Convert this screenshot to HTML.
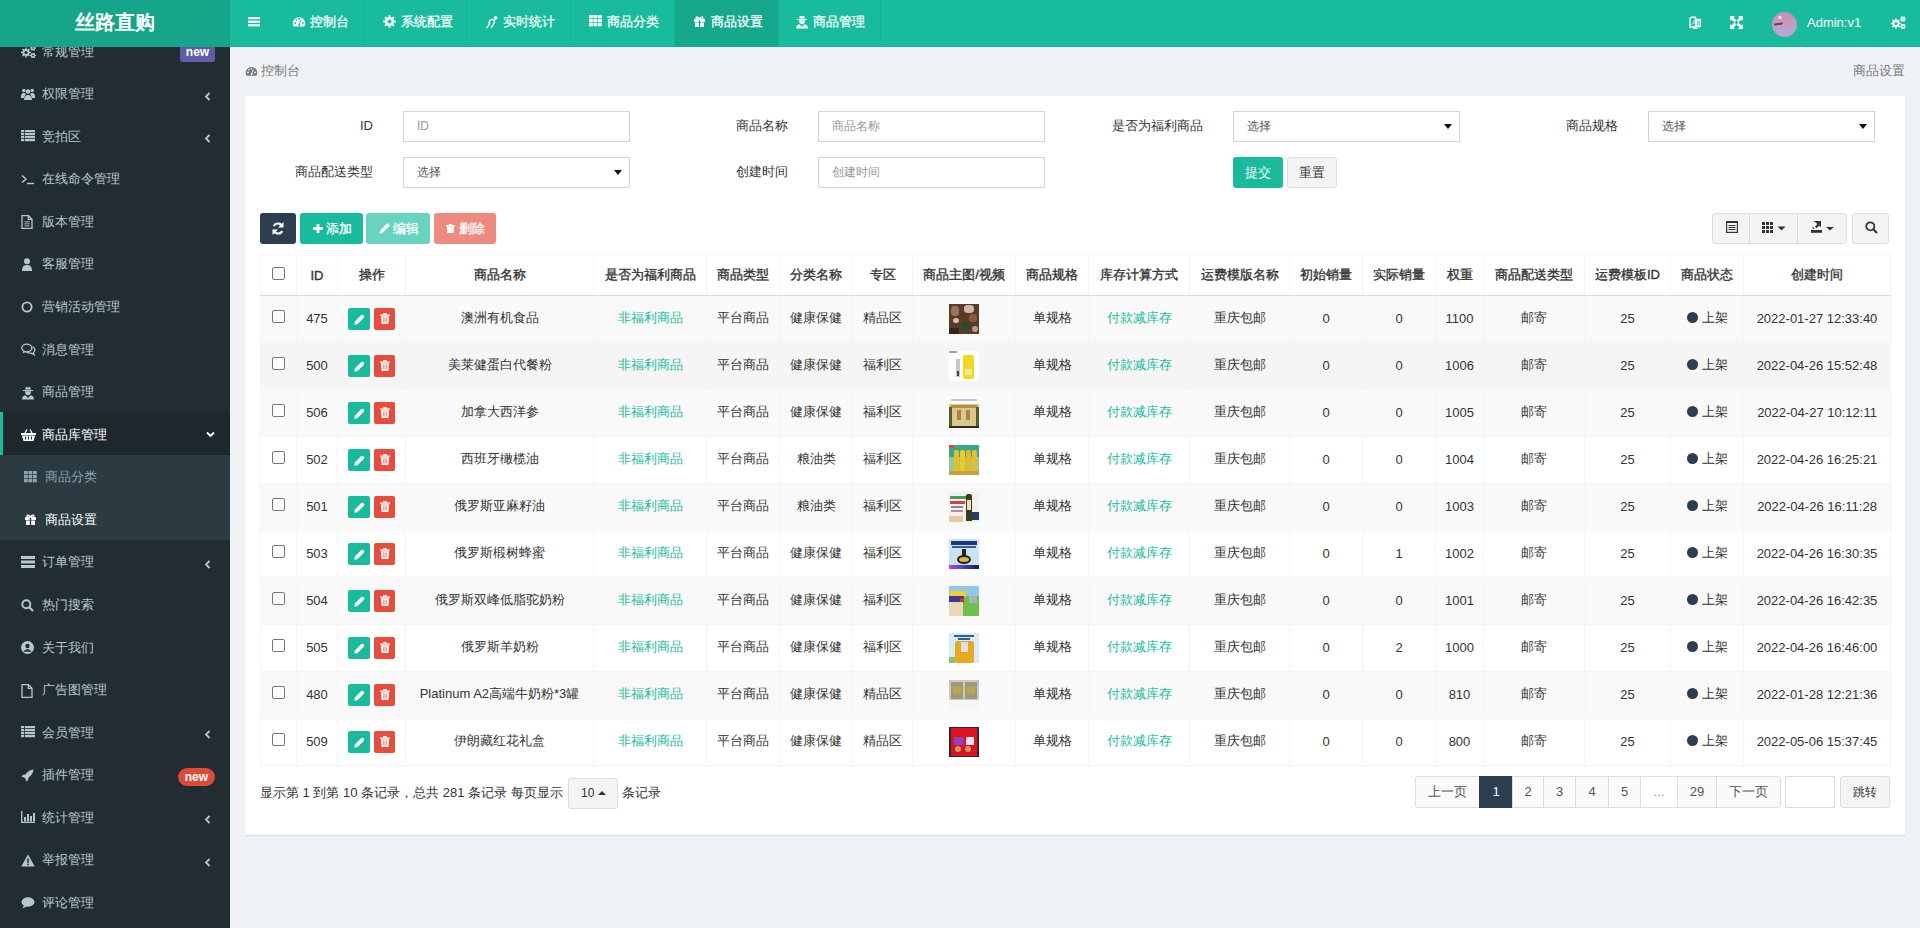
<!DOCTYPE html><html><head><meta charset="utf-8"><title>商品设置</title><style>
*{box-sizing:border-box;margin:0;padding:0}
html,body{width:1920px;height:928px;overflow:hidden}
body{font-family:"Liberation Sans",sans-serif;font-size:13px;color:#333;background:#f0f3f6;position:relative}
.abs{position:absolute}
svg{display:block}
#hdr{position:absolute;left:0;top:0;width:1920px;height:47px;background:#18bc9c;box-shadow:inset 0 -1px 0 rgba(0,0,0,0.06)}
#logo{position:absolute;left:0;top:0;width:230px;height:47px;background:#15a589;color:#fff;font-size:20px;font-weight:bold;text-align:center;line-height:45px;letter-spacing:0px}
.tab{position:absolute;top:0;height:47px;color:#fff;font-size:13px;line-height:42px;border-right:1px solid #17b294;white-space:nowrap}
.tab.on{background:#15a88c}
.tab .ic{position:absolute;top:15px}
.tab .tx{position:absolute;top:0.5px;-webkit-text-stroke:0.25px #fff}
#side{position:absolute;left:0;top:47px;width:230px;height:881px;background:#222d32;overflow:hidden}
.mi{position:absolute;left:0;width:230px;height:42.57px;color:#b8c7ce;white-space:nowrap}
.mi .tx{position:absolute;left:42px;top:13.4px;line-height:18px;font-size:13px}
.mi .ic{position:absolute;left:21px;top:16px}
.mi .chev{position:absolute;left:204px;top:20px}
#content{position:absolute;left:230px;top:47px;width:1690px;height:881px;background:#f0f3f6}
#panel{position:absolute;left:245px;top:96px;width:1660px;height:739px;background:#fff;box-shadow:0 1px 1px rgba(0,0,0,0.08)}
.lbl{position:absolute;width:160px;text-align:right;line-height:18px;font-size:13px;color:#333}
.inp{position:absolute;width:227px;height:31px;border:1px solid #d4d4d4;background:#fff;font-size:12px;line-height:29px;padding-left:13px;color:#999}
.inp.sel{color:#555}
.caret{position:absolute;width:0;height:0;border-left:4.5px solid transparent;border-right:4.5px solid transparent;border-top:5px solid #111}
.btn{position:absolute;height:31px;border-radius:3px;color:#fff;font-size:12px;line-height:31px;text-align:center;white-space:nowrap}
table.tb{position:absolute;left:260px;top:254px;width:1630px;border-collapse:collapse;table-layout:fixed;font-size:13px}
.tb th,.tb td{border:1px solid #f4f4f4;text-align:center;vertical-align:middle;white-space:nowrap;overflow:hidden;padding:0}
.tb th{height:41px;font-weight:normal;-webkit-text-stroke:0.35px #333;color:#333;border-bottom:1px solid #dadada;background:#fff}
.tb td{height:47px;color:#333;padding-bottom:2px}
.tb th b{-webkit-text-stroke:0}
.tb tr.odd td{background:#f9f9f9}
.tb tr.hov td{background:#f5f5f5}
.tb tr.ev td{background:#fff}
.cb{display:inline-block;width:13px;height:13px;border:1px solid #767676;border-radius:2px;background:#fff;vertical-align:middle;position:relative;top:-3px}
.tb td.grn,.grn{color:#18bc9c}
.sb{display:inline-block;width:22px;height:22px;border-radius:2px;vertical-align:middle;position:relative}
.thumb{display:inline-block;width:30px;height:30px;vertical-align:middle}
.pg{position:absolute;top:776px;height:32px;border:1px solid #ddd;background:#fafafa;color:#555;text-align:center;line-height:30px;font-size:13px}
</style></head><body>
<div id="hdr">
<div id="logo">丝路直购</div>
<svg class="abs" style="left:247.5px;top:16.8px" width="12" height="10" viewBox="0 0 12 10"><rect y="0" width="12" height="2.2" fill="#fff"/><rect y="3.6" width="12" height="2.2" fill="#fff"/><rect y="7.2" width="12" height="2.2" fill="#fff"/></svg>
<div class="tab" style="left:276px;width:88px">
<div class="ic" style="left:15.600000000000023px"><svg width="14" height="14" viewBox="0 0 14 14"><path d="M7 2.2A6.2 6.2 0 0 0 .8 8.4c0 1.2.3 2.2.9 3.2h10.6c.6-1 .9-2 .9-3.2A6.2 6.2 0 0 0 7 2.2z" fill="#fff"/><circle cx="3.2" cy="8" r=".9" fill="#18bc9c"/><circle cx="4.2" cy="5.1" r=".9" fill="#18bc9c"/><circle cx="7" cy="4" r=".9" fill="#18bc9c"/><circle cx="10.8" cy="8" r=".9" fill="#18bc9c"/><path d="M8.8 5 7.4 9.3" stroke="#18bc9c" stroke-width="1"/><circle cx="7.2" cy="10" r="1.1" fill="#18bc9c"/></svg></div>
<div class="tx" style="left:33.60000000000002px">控制台</div>
</div>
<div class="tab" style="left:364px;width:103px">
<div class="ic" style="left:18.80000000000001px"><svg width="13" height="13" viewBox="0 0 13 13"><path d="M10.99 5.51 L12.73 5.55 L12.73 7.45 L10.99 7.49 L10.37 8.98 L11.57 10.23 L10.23 11.57 L8.98 10.37 L7.49 10.99 L7.45 12.73 L5.55 12.73 L5.51 10.99 L4.02 10.37 L2.77 11.57 L1.43 10.23 L2.63 8.98 L2.01 7.49 L0.27 7.45 L0.27 5.55 L2.01 5.51 L2.63 4.02 L1.43 2.77 L2.77 1.43 L4.02 2.63 L5.51 2.01 L5.55 0.27 L7.45 0.27 L7.49 2.01 L8.98 2.63 L10.23 1.43 L11.57 2.77 L10.37 4.02Z" fill="#fff"/><circle cx="6.5" cy="6.5" r="2" fill="#18bc9c"/></svg></div>
<div class="tx" style="left:36.80000000000001px">系统配置</div>
</div>
<div class="tab" style="left:467px;width:104px">
<div class="ic" style="left:18.19999999999999px"><svg width="14" height="14" viewBox="0 0 14 14"><path d="M1.5 13.2C3 11 4.2 9.5 5 8.2" stroke="#fff" stroke-width="1.3" fill="none"/><path d="M4.5 9.5C3.5 7.5 4.5 4.8 7 4.5c2-.2 2.8 1.6 2.2 3.3-.6 1.8-1.8 3.8-3.4 4.8" stroke="#fff" stroke-width="1.4" fill="none"/><path d="M8.5 2.5 11 .5l1.5 2.8L10.5 5.5z" fill="#fff"/></svg></div>
<div class="tx" style="left:36.19999999999999px">实时统计</div>
</div>
<div class="tab" style="left:571px;width:104px">
<div class="ic" style="left:17.799999999999955px"><svg width="13" height="12" viewBox="0 0 13 12"><rect x="0.0" y="0" width="3.8" height="3.3" fill="#fff"/><rect x="4.5" y="0" width="3.8" height="3.3" fill="#fff"/><rect x="9.0" y="0" width="3.8" height="3.3" fill="#fff"/><rect x="0.0" y="4" width="3.8" height="3.3" fill="#fff"/><rect x="4.5" y="4" width="3.8" height="3.3" fill="#fff"/><rect x="9.0" y="4" width="3.8" height="3.3" fill="#fff"/><rect x="0.0" y="8" width="3.8" height="3.3" fill="#fff"/><rect x="4.5" y="8" width="3.8" height="3.3" fill="#fff"/><rect x="9.0" y="8" width="3.8" height="3.3" fill="#fff"/></svg></div>
<div class="tx" style="left:35.799999999999955px">商品分类</div>
</div>
<div class="tab on" style="left:675px;width:104px">
<div class="ic" style="left:18px"><svg width="13" height="13" viewBox="0 0 13 13"><path d="M1 4h11v3H1z" fill="#fff"/><path d="M2 7.5h9V12H2z" fill="#fff"/><path d="M5.8 4h1.4v8H5.8z" fill="#15a88c"/><path d="M6.5 4C5.5 2.2 3 1.2 3 3s3.5 1 3.5 1zM6.5 4c1-1.8 3.5-2.8 3.5-1S6.5 4 6.5 4z" fill="none" stroke="#fff" stroke-width="1.2"/></svg></div>
<div class="tx" style="left:36px">商品设置</div>
</div>
<div class="tab" style="left:779px;width:102px">
<div class="ic" style="left:15.799999999999955px"><svg width="14" height="14" viewBox="0 0 14 14"><path d="M4 3.5 5 .8l2 .7 2-.7 1 2.7z" fill="#fff"/><path d="M2 4h10v1H2z" fill="#fff"/><path d="M4 5.2h6c0 2.5-1.2 4-3 4s-3-1.5-3-4z" fill="#fff"/><path d="M1 13.5c0-2.5 1.5-4 3.5-4.3L7 12l2.5-2.8c2 .3 3.5 1.8 3.5 4.3z" fill="#fff"/></svg></div>
<div class="tx" style="left:33.799999999999955px">商品管理</div>
</div>
<svg class="abs" style="left:1689px;top:16px" width="13" height="13" viewBox="0 0 13 13"><path d="M1 2.2 3 1.2h3.5V11H1z" fill="none" stroke="#fff" stroke-width="1.4"/><path d="M6.5 2.8H12v8.5H6.5z" fill="#fff"/><path d="M2.5 8.5c1.5-.5 2.5-2 2.8-4.2" stroke="#fff" stroke-width="1" fill="none"/><path d="M8.3 9.5 9.2 5h.6l.9 4.5" stroke="#18bc9c" stroke-width=".9" fill="none"/><path d="M4 12.5h5" stroke="#fff" stroke-width="1.2"/></svg>
<svg class="abs" style="left:1730px;top:16px" width="13" height="13" viewBox="0 0 13 13"><path d="M0 0h5L3.5 1.5 6.5 4.5 4.5 6.5 1.5 3.5 0 5zM13 0v5L11.5 3.5 8.5 6.5 6.5 4.5 9.5 1.5 8 0zM13 13H8l1.5-1.5-3-3 2-2 3 3L13 8zM0 13V8l1.5 1.5 3-3 2 2-3 3L5 13z" fill="#fff"/></svg>
<div class="abs" style="left:1772px;top:12px;width:25px;height:25px;border-radius:50%;background:linear-gradient(180deg,#c98fb2 0%,#c69ab8 45%,#b8a4d6 75%,#c8a0c8 100%);overflow:hidden"><i style="position:absolute;left:2px;top:11px;width:9px;height:2px;background:#6a3a50;border-radius:1px;transform:rotate(-10deg)"></i><i style="position:absolute;left:6px;top:4px;width:4px;height:3px;background:#ecd0e8;border-radius:2px"></i></div>
<div class="abs" style="left:1807px;top:14px;color:#fff;font-size:13px;line-height:18px">Admin:v1</div>
<div class="abs" style="left:1891px;top:16px"><svg width="15" height="14" viewBox="0 0 15 14"><path d="M8.52 6.73 L9.94 6.75 L9.94 8.25 L8.52 8.27 L8.03 9.44 L9.03 10.46 L7.96 11.53 L6.94 10.53 L5.77 11.02 L5.75 12.44 L4.25 12.44 L4.23 11.02 L3.06 10.53 L2.04 11.53 L0.97 10.46 L1.97 9.44 L1.48 8.27 L0.06 8.25 L0.06 6.75 L1.48 6.73 L1.97 5.56 L0.97 4.54 L2.04 3.47 L3.06 4.47 L4.23 3.98 L4.25 2.56 L5.75 2.56 L5.77 3.98 L6.94 4.47 L7.96 3.47 L9.03 4.54 L8.03 5.56Z" fill="#fff"/><circle cx="5" cy="7.5" r="1.6" fill="#18bc9c"/><path d="M14.32 2.38 L14.95 2.45 L14.95 3.55 L14.32 3.62 L13.70 4.70 L13.95 5.28 L13.00 5.83 L12.62 5.32 L11.38 5.32 L11.00 5.83 L10.05 5.28 L10.30 4.70 L9.68 3.62 L9.05 3.55 L9.05 2.45 L9.68 2.38 L10.30 1.30 L10.05 0.72 L11.00 0.17 L11.38 0.68 L12.62 0.68 L13.00 0.17 L13.95 0.72 L13.70 1.30Z" fill="#fff"/><circle cx="12" cy="3" r="0.8" fill="#18bc9c"/><path d="M14.32 9.88 L14.95 9.95 L14.95 11.05 L14.32 11.12 L13.70 12.20 L13.95 12.78 L13.00 13.33 L12.62 12.82 L11.38 12.82 L11.00 13.33 L10.05 12.78 L10.30 12.20 L9.68 11.12 L9.05 11.05 L9.05 9.95 L9.68 9.88 L10.30 8.80 L10.05 8.22 L11.00 7.67 L11.38 8.18 L12.62 8.18 L13.00 7.67 L13.95 8.22 L13.70 8.80Z" fill="#fff"/><circle cx="12" cy="10.5" r="0.8" fill="#18bc9c"/></svg></div>
</div>
<div id="side">
<div class="mi" style="top:-17.87px;color:#b8c7ce">
<div class="ic" style="left:21px"><svg width="15" height="14" viewBox="0 0 15 14"><path d="M8.52 6.73 L9.94 6.75 L9.94 8.25 L8.52 8.27 L8.03 9.44 L9.03 10.46 L7.96 11.53 L6.94 10.53 L5.77 11.02 L5.75 12.44 L4.25 12.44 L4.23 11.02 L3.06 10.53 L2.04 11.53 L0.97 10.46 L1.97 9.44 L1.48 8.27 L0.06 8.25 L0.06 6.75 L1.48 6.73 L1.97 5.56 L0.97 4.54 L2.04 3.47 L3.06 4.47 L4.23 3.98 L4.25 2.56 L5.75 2.56 L5.77 3.98 L6.94 4.47 L7.96 3.47 L9.03 4.54 L8.03 5.56Z" fill="#b8c7ce"/><circle cx="5" cy="7.5" r="1.6" fill="#222d32"/><path d="M14.32 2.38 L14.95 2.45 L14.95 3.55 L14.32 3.62 L13.70 4.70 L13.95 5.28 L13.00 5.83 L12.62 5.32 L11.38 5.32 L11.00 5.83 L10.05 5.28 L10.30 4.70 L9.68 3.62 L9.05 3.55 L9.05 2.45 L9.68 2.38 L10.30 1.30 L10.05 0.72 L11.00 0.17 L11.38 0.68 L12.62 0.68 L13.00 0.17 L13.95 0.72 L13.70 1.30Z" fill="#b8c7ce"/><circle cx="12" cy="3" r="0.8" fill="#222d32"/><path d="M14.32 9.88 L14.95 9.95 L14.95 11.05 L14.32 11.12 L13.70 12.20 L13.95 12.78 L13.00 13.33 L12.62 12.82 L11.38 12.82 L11.00 13.33 L10.05 12.78 L10.30 12.20 L9.68 11.12 L9.05 11.05 L9.05 9.95 L9.68 9.88 L10.30 8.80 L10.05 8.22 L11.00 7.67 L11.38 8.18 L12.62 8.18 L13.00 7.67 L13.95 8.22 L13.70 8.80Z" fill="#b8c7ce"/><circle cx="12" cy="10.5" r="0.8" fill="#222d32"/></svg></div>
<div class="tx" style="left:42px">常规管理</div>
<div class="abs" style="left:180px;top:14.9px;width:35px;height:18px;background:#605ca8;border-radius:3px;color:#fff;font-weight:bold;font-size:12px;line-height:17px;text-align:center">new</div>
</div>
<div class="mi" style="top:24.70px;color:#b8c7ce">
<div class="ic" style="left:21px"><svg width="14" height="12" viewBox="0 0 14 12"><circle cx="7" cy="3.5" r="2.3" fill="#b8c7ce"/><path d="M3 12c0-3 1.5-5 4-5s4 2 4 5z" fill="#b8c7ce"/><circle cx="2.8" cy="2.5" r="1.7" fill="#b8c7ce"/><circle cx="11.2" cy="2.5" r="1.7" fill="#b8c7ce"/><path d="M0 8.5c0-2 1-3.5 2.8-3.5 1 0 1.5.4 2 1L3 10H0zM14 8.5c0-2-1-3.5-2.8-3.5-1 0-1.5.4-2 1L11 10h3z" fill="#b8c7ce"/></svg></div>
<div class="tx" style="left:42px">权限管理</div>
<div class="chev"><svg width="7" height="9" viewBox="0 0 7 9"><path d="M5.5 1 2 4.5 5.5 8" stroke="#b8c7ce" stroke-width="1.8" fill="none"/></svg></div>
</div>
<div class="mi" style="top:67.27px;color:#b8c7ce">
<div class="ic" style="left:21px"><svg width="14" height="12" viewBox="0 0 14 12"><rect x="0" y="0" width="3" height="2.2" fill="#b8c7ce"/><rect x="3.8" y="0" width="10.2" height="2.2" fill="#b8c7ce"/><rect x="0" y="3" width="3" height="2.2" fill="#b8c7ce"/><rect x="3.8" y="3" width="10.2" height="2.2" fill="#b8c7ce"/><rect x="0" y="6" width="3" height="2.2" fill="#b8c7ce"/><rect x="3.8" y="6" width="10.2" height="2.2" fill="#b8c7ce"/><rect x="0" y="9" width="3" height="2.2" fill="#b8c7ce"/><rect x="3.8" y="9" width="10.2" height="2.2" fill="#b8c7ce"/></svg></div>
<div class="tx" style="left:42px">竞拍区</div>
<div class="chev"><svg width="7" height="9" viewBox="0 0 7 9"><path d="M5.5 1 2 4.5 5.5 8" stroke="#b8c7ce" stroke-width="1.8" fill="none"/></svg></div>
</div>
<div class="mi" style="top:109.84px;color:#b8c7ce">
<div class="ic" style="left:21px"><svg width="14" height="12" viewBox="0 0 14 12"><path d="M1 2.5 5 6 1 9.5" stroke="#b8c7ce" stroke-width="1.4" fill="none"/><path d="M6 10.5h7" stroke="#b8c7ce" stroke-width="1.4"/></svg></div>
<div class="tx" style="left:42px">在线命令管理</div>
</div>
<div class="mi" style="top:152.41px;color:#b8c7ce">
<div class="ic" style="left:21px"><svg width="12" height="14" viewBox="0 0 12 14"><path d="M1 .7h6.5l3.5 3.5v9.1H1z" fill="none" stroke="#b8c7ce" stroke-width="1.3"/><path d="M7.3 .7v3.6H11" fill="none" stroke="#b8c7ce" stroke-width="1.2"/><path d="M3.5 6.8h5M3.5 8.8h5M3.5 10.8h5" stroke="#b8c7ce" stroke-width=".9"/></svg></div>
<div class="tx" style="left:42px">版本管理</div>
</div>
<div class="mi" style="top:194.98px;color:#b8c7ce">
<div class="ic" style="left:21px"><svg width="12" height="13" viewBox="0 0 12 13"><circle cx="6" cy="3.3" r="3" fill="#b8c7ce"/><path d="M1 13c0-4 1.5-6 5-6s5 2 5 6z" fill="#b8c7ce"/></svg></div>
<div class="tx" style="left:42px">客服管理</div>
</div>
<div class="mi" style="top:237.55px;color:#b8c7ce">
<div class="ic" style="left:21px"><svg width="12" height="12" viewBox="0 0 12 12"><circle cx="6" cy="6" r="4.6" fill="none" stroke="#b8c7ce" stroke-width="1.8"/></svg></div>
<div class="tx" style="left:42px">营销活动管理</div>
</div>
<div class="mi" style="top:280.12px;color:#b8c7ce">
<div class="ic" style="left:21px"><svg width="15" height="13" viewBox="0 0 15 13"><ellipse cx="5.8" cy="5" rx="5" ry="3.8" fill="none" stroke="#b8c7ce" stroke-width="1.3"/><path d="M2.5 8 1.5 10.5 5 8.8" fill="#b8c7ce"/><path d="M11.5 3.5c1.5.8 2.5 2 2.5 3.3 0 1.1-.6 2-1.6 2.6l.8 2.3-3-1.6c-.5.1-1 .1-1.5.1-1.5 0-2.9-.5-3.8-1.3" fill="none" stroke="#b8c7ce" stroke-width="1.2"/></svg></div>
<div class="tx" style="left:42px">消息管理</div>
</div>
<div class="mi" style="top:322.69px;color:#b8c7ce">
<div class="ic" style="left:21px"><svg width="14" height="14" viewBox="0 0 14 14"><path d="M4 3.5 5 .8l2 .7 2-.7 1 2.7z" fill="#b8c7ce"/><path d="M2 4h10v1H2z" fill="#b8c7ce"/><path d="M4 5.2h6c0 2.5-1.2 4-3 4s-3-1.5-3-4z" fill="#b8c7ce"/><path d="M1 13.5c0-2.5 1.5-4 3.5-4.3L7 12l2.5-2.8c2 .3 3.5 1.8 3.5 4.3z" fill="#b8c7ce"/></svg></div>
<div class="tx" style="left:42px">商品管理</div>
</div>
<div class="mi" style="top:365.26px;background:#1e282c;border-left:3px solid #18bc9c;color:#fff">
<div class="ic" style="left:18px"><svg width="15" height="14" viewBox="0 0 15 14"><path d="M4 5 6 1.5M11 5 9 1.5" stroke="#fff" stroke-width="1.3"/><path d="M0 5h15v2H0z" fill="#fff"/><path d="M1 7.5h13L12.5 13h-10z" fill="#fff"/><path d="M4.5 8.5v3M7.5 8.5v3M10.5 8.5v3" stroke="#1e282c" stroke-width="1"/></svg></div>
<div class="tx" style="left:39px">商品库管理</div>
<div class="chev" style="left:203px;top:19px"><svg width="9" height="7" viewBox="0 0 9 7"><path d="M1 1.5 4.5 5 8 1.5" stroke="#fff" stroke-width="1.8" fill="none"/></svg></div>
</div>
<div class="mi" style="top:407.83px;background:#2c3b41;color:#8aa4af">
<div class="ic" style="left:24px"><svg width="13" height="12" viewBox="0 0 13 12"><rect x="0.0" y="0" width="3.8" height="3.3" fill="#8aa4af"/><rect x="4.5" y="0" width="3.8" height="3.3" fill="#8aa4af"/><rect x="9.0" y="0" width="3.8" height="3.3" fill="#8aa4af"/><rect x="0.0" y="4" width="3.8" height="3.3" fill="#8aa4af"/><rect x="4.5" y="4" width="3.8" height="3.3" fill="#8aa4af"/><rect x="9.0" y="4" width="3.8" height="3.3" fill="#8aa4af"/><rect x="0.0" y="8" width="3.8" height="3.3" fill="#8aa4af"/><rect x="4.5" y="8" width="3.8" height="3.3" fill="#8aa4af"/><rect x="9.0" y="8" width="3.8" height="3.3" fill="#8aa4af"/></svg></div>
<div class="tx" style="left:45px">商品分类</div>
</div>
<div class="mi" style="top:450.40px;background:#2c3b41;color:#fff">
<div class="ic" style="left:24px"><svg width="13" height="13" viewBox="0 0 13 13"><path d="M1 4h11v3H1z" fill="#fff"/><path d="M2 7.5h9V12H2z" fill="#fff"/><path d="M5.8 4h1.4v8H5.8z" fill="#2c3b41"/><path d="M6.5 4C5.5 2.2 3 1.2 3 3s3.5 1 3.5 1zM6.5 4c1-1.8 3.5-2.8 3.5-1S6.5 4 6.5 4z" fill="none" stroke="#fff" stroke-width="1.2"/></svg></div>
<div class="tx" style="left:45px">商品设置</div>
</div>
<div class="mi" style="top:492.97px;color:#b8c7ce">
<div class="ic" style="left:21px"><svg width="14" height="12" viewBox="0 0 14 12"><rect x="0" y="0" width="14" height="3" fill="#b8c7ce"/><rect x="0" y="4.5" width="14" height="3" fill="#b8c7ce"/><rect x="0" y="9" width="14" height="3" fill="#b8c7ce"/></svg></div>
<div class="tx" style="left:42px">订单管理</div>
<div class="chev"><svg width="7" height="9" viewBox="0 0 7 9"><path d="M5.5 1 2 4.5 5.5 8" stroke="#b8c7ce" stroke-width="1.8" fill="none"/></svg></div>
</div>
<div class="mi" style="top:535.54px;color:#b8c7ce">
<div class="ic" style="left:21px"><svg width="13" height="13" viewBox="0 0 13 13"><circle cx="5.3" cy="5.3" r="4" fill="none" stroke="#b8c7ce" stroke-width="1.9"/><path d="M8.3 8.3 12 12" stroke="#b8c7ce" stroke-width="2.2"/></svg></div>
<div class="tx" style="left:42px">热门搜索</div>
</div>
<div class="mi" style="top:578.11px;color:#b8c7ce">
<div class="ic" style="left:21px"><svg width="13" height="13" viewBox="0 0 13 13"><circle cx="6.5" cy="6.5" r="6.5" fill="#b8c7ce"/><circle cx="6.5" cy="5" r="2.2" fill="#222d32"/><path d="M2.5 10.8c.8-1.8 2.2-2.6 4-2.6s3.2.8 4 2.6" fill="#222d32"/></svg></div>
<div class="tx" style="left:42px">关于我们</div>
</div>
<div class="mi" style="top:620.68px;color:#b8c7ce">
<div class="ic" style="left:21px"><svg width="12" height="14" viewBox="0 0 12 14"><path d="M1 .7h6.5l3.5 3.5v9.1H1z" fill="none" stroke="#b8c7ce" stroke-width="1.3"/><path d="M7.3 .7v3.6H11" fill="none" stroke="#b8c7ce" stroke-width="1.2"/></svg></div>
<div class="tx" style="left:42px">广告图管理</div>
</div>
<div class="mi" style="top:663.25px;color:#b8c7ce">
<div class="ic" style="left:21px"><svg width="14" height="12" viewBox="0 0 14 12"><rect x="0" y="0" width="3" height="2.2" fill="#b8c7ce"/><rect x="3.8" y="0" width="10.2" height="2.2" fill="#b8c7ce"/><rect x="0" y="3" width="3" height="2.2" fill="#b8c7ce"/><rect x="3.8" y="3" width="10.2" height="2.2" fill="#b8c7ce"/><rect x="0" y="6" width="3" height="2.2" fill="#b8c7ce"/><rect x="3.8" y="6" width="10.2" height="2.2" fill="#b8c7ce"/><rect x="0" y="9" width="3" height="2.2" fill="#b8c7ce"/><rect x="3.8" y="9" width="10.2" height="2.2" fill="#b8c7ce"/></svg></div>
<div class="tx" style="left:42px">会员管理</div>
<div class="chev"><svg width="7" height="9" viewBox="0 0 7 9"><path d="M5.5 1 2 4.5 5.5 8" stroke="#b8c7ce" stroke-width="1.8" fill="none"/></svg></div>
</div>
<div class="mi" style="top:705.82px;color:#b8c7ce">
<div class="ic" style="left:21px"><svg width="13" height="13" viewBox="0 0 13 13"><path d="M12.5.5C9 .8 6.5 2.5 4.5 5.5L2 5.8.5 8l2.5.3 1.7 1.7.3 2.5 2.2-1.5.3-2.5c3-2 4.7-4.5 5-8z" fill="#b8c7ce"/></svg></div>
<div class="tx" style="left:42px">插件管理</div>
<div class="abs" style="left:177.6px;top:14.9px;width:37.6px;height:18.5px;background:#dd4b39;border-radius:9px;color:#fff;font-weight:bold;font-size:12px;line-height:18px;text-align:center">new</div>
</div>
<div class="mi" style="top:748.39px;color:#b8c7ce">
<div class="ic" style="left:21px"><svg width="14" height="12" viewBox="0 0 14 12"><path d="M.7 0v11.3H14" stroke="#b8c7ce" stroke-width="1.3" fill="none"/><rect x="3" y="6" width="2" height="4.5" fill="#b8c7ce"/><rect x="6" y="3" width="2" height="7.5" fill="#b8c7ce"/><rect x="9" y="5" width="2" height="5.5" fill="#b8c7ce"/><rect x="12" y="2" width="2" height="8.5" fill="#b8c7ce"/></svg></div>
<div class="tx" style="left:42px">统计管理</div>
<div class="chev"><svg width="7" height="9" viewBox="0 0 7 9"><path d="M5.5 1 2 4.5 5.5 8" stroke="#b8c7ce" stroke-width="1.8" fill="none"/></svg></div>
</div>
<div class="mi" style="top:790.96px;color:#b8c7ce">
<div class="ic" style="left:21px"><svg width="14" height="13" viewBox="0 0 14 13"><path d="M7 .5 13.8 12.5H.2z" fill="#b8c7ce"/><path d="M7 4.5v4.2" stroke="#222d32" stroke-width="1.6"/><circle cx="7" cy="10.4" r=".9" fill="#222d32"/></svg></div>
<div class="tx" style="left:42px">举报管理</div>
<div class="chev"><svg width="7" height="9" viewBox="0 0 7 9"><path d="M5.5 1 2 4.5 5.5 8" stroke="#b8c7ce" stroke-width="1.8" fill="none"/></svg></div>
</div>
<div class="mi" style="top:833.53px;color:#b8c7ce">
<div class="ic" style="left:21px"><svg width="14" height="12" viewBox="0 0 14 12"><ellipse cx="7" cy="5" rx="6.5" ry="4.7" fill="#b8c7ce"/><path d="M3 8 1.5 11.5 6.5 9" fill="#b8c7ce"/></svg></div>
<div class="tx" style="left:42px">评论管理</div>
</div>
</div>
<div id="content"></div>
<div class="abs" style="left:245px;top:65px"><svg width="13" height="13" viewBox="0 0 14 14"><path d="M7 2.2A6.2 6.2 0 0 0 .8 8.4c0 1.2.3 2.2.9 3.2h10.6c.6-1 .9-2 .9-3.2A6.2 6.2 0 0 0 7 2.2z" fill="#777"/><circle cx="3.2" cy="8" r=".9" fill="#f0f3f6"/><circle cx="4.2" cy="5.1" r=".9" fill="#f0f3f6"/><circle cx="7" cy="4" r=".9" fill="#f0f3f6"/><circle cx="10.8" cy="8" r=".9" fill="#f0f3f6"/><path d="M8.8 5 7.4 9.3" stroke="#f0f3f6" stroke-width="1"/><circle cx="7.2" cy="10" r="1.1" fill="#f0f3f6"/></svg></div>
<div class="abs" style="left:261px;top:62px;color:#777;line-height:18px">控制台</div>
<div class="abs" style="left:1853px;top:62px;color:#777;line-height:18px">商品设置</div>
<div id="panel"></div>
<div class="lbl" style="left:213px;top:117px">ID</div>
<div class="lbl" style="left:628px;top:117px">商品名称</div>
<div class="lbl" style="left:1043px;top:117px">是否为福利商品</div>
<div class="lbl" style="left:1458px;top:117px">商品规格</div>
<div class="lbl" style="left:213px;top:163px">商品配送类型</div>
<div class="lbl" style="left:628px;top:163px">创建时间</div>
<div class="inp" style="left:403px;top:111px">ID</div>
<div class="inp" style="left:818px;top:111px">商品名称</div>
<div class="inp sel" style="left:1233px;top:111px">选择</div>
<div class="caret" style="left:1444px;top:124px"></div>
<div class="inp sel" style="left:1648px;top:111px">选择</div>
<div class="caret" style="left:1859px;top:124px"></div>
<div class="inp sel" style="left:403px;top:157px">选择</div>
<div class="caret" style="left:614px;top:170px"></div>
<div class="inp" style="left:818px;top:157px">创建时间</div>
<div class="btn" style="left:1233px;top:157px;width:50px;background:#18bc9c;font-size:13px">提交</div>
<div class="btn" style="left:1287px;top:157px;width:50px;background:#f4f4f4;border:1px solid #ddd;color:#333;font-size:13px;line-height:29px">重置</div>
<div class="btn" style="left:260px;top:213px;width:36px;background:#2c3e50"><svg style="position:absolute;left:12px;top:9px" width="12" height="13" viewBox="0 0 12 13"><path d="M10.3 4.5A4.6 4.6 0 0 0 1.8 4" stroke="#fff" stroke-width="2" fill="none"/><path d="M11.5 0v5.5H6z" fill="#fff"/><path d="M1.7 8.5a4.6 4.6 0 0 0 8.5.5" stroke="#fff" stroke-width="2" fill="none"/><path d="M.5 13V7.5H6z" fill="#fff"/></svg></div>
<div class="btn" style="left:300px;top:213px;width:63px;background:#18bc9c"><svg style="position:absolute;left:13px;top:11px" width="10" height="9" viewBox="0 0 10 9"><path d="M3.6 0h2.8v3.1H10v2.8H6.4V9H3.6V5.9H0V3.1h3.6z" fill="#fff"/></svg><span style="position:absolute;left:26px;top:0;font-size:13px;-webkit-text-stroke:0.3px #fff">添加</span></div>
<div class="btn" style="left:366px;top:213px;width:64px;background:#18bc9c;opacity:.65"><svg style="position:absolute;left:13px;top:10px" width="11" height="11" viewBox="0 0 11 11"><path d="M9.3.6l1.1 1.1c.4.4.4 1 0 1.4L4 9.5 1 10.6c-.5.2-.8-.1-.6-.6L1.5 7 7.9.6c.4-.4 1-.4 1.4 0z" fill="#fff"/></svg><span style="position:absolute;left:27px;top:0;font-size:13px;-webkit-text-stroke:0.3px #fff">编辑</span></div>
<div class="btn" style="left:434px;top:213px;width:62px;background:#e74c3c;opacity:.65"><svg style="position:absolute;left:12px;top:11px" width="9" height="9" viewBox="0 0 9 9"><path d="M0 1h9v1.2H0zM3 0h3v1H3zM.8 2.6h7.4L7.6 9H1.4z" fill="#fff"/></svg><span style="position:absolute;left:25px;top:0;font-size:13px;-webkit-text-stroke:0.3px #fff">删除</span></div>
<div class="abs" style="left:1712px;top:213px;width:135px;height:31px;border:1px solid #ddd;border-radius:3px;background:#f4f4f4"></div>
<div class="abs" style="left:1749px;top:214px;width:1px;height:29px;background:#ddd"></div>
<div class="abs" style="left:1797px;top:214px;width:1px;height:29px;background:#ddd"></div>
<svg class="abs" style="left:1726px;top:221px" width="12" height="12" viewBox="0 0 12 12"><rect x=".6" y=".6" width="10.8" height="10.8" fill="none" stroke="#333" stroke-width="1.2"/><rect x="0" y="0" width="12" height="2" fill="#333"/><path d="M2.5 4.5h7M2.5 6.5h7M2.5 8.5h7" stroke="#333" stroke-width="1"/></svg>
<svg class="abs" style="left:1762px;top:222px" width="24" height="11" viewBox="0 0 24 11"><g fill="#333"><rect x="0" y="0" width="3" height="3"/><rect x="4" y="0" width="3" height="3"/><rect x="8" y="0" width="3" height="3"/><rect x="0" y="4" width="3" height="3"/><rect x="4" y="4" width="3" height="3"/><rect x="8" y="4" width="3" height="3"/><rect x="0" y="8" width="3" height="3"/><rect x="4" y="8" width="3" height="3"/><rect x="8" y="8" width="3" height="3"/><path d="M15.5 4.5h8l-4 4z"/></g></svg>
<svg class="abs" style="left:1811px;top:221px" width="24" height="12" viewBox="0 0 24 12"><g fill="#333"><rect x="0" y="9" width="11" height="2.8"/><path d="M2.6 0H10v6.5L8.2 4.6 5.6 7.2 4 5.6 6.5 3z"/><path d="M1.8 5.8 3.6 7.6 3 8.2 1.2 6.4z"/><path d="M15 6h7.8l-3.9 3.6z"/></g></svg>
<div class="abs" style="left:1852px;top:213px;width:37px;height:31px;border:1px solid #ddd;border-radius:3px;background:#f4f4f4"></div>
<svg class="abs" style="left:1865px;top:221px" width="13" height="13" viewBox="0 0 13 13"><circle cx="5.3" cy="5.3" r="4" fill="none" stroke="#333" stroke-width="1.8"/><path d="M8.3 8.3 12 12" stroke="#333" stroke-width="2.2"/></svg>
<table class="tb"><colgroup><col style="width:36px"><col style="width:41px"><col style="width:68px"><col style="width:188px"><col style="width:113px"><col style="width:73px"><col style="width:73px"><col style="width:60px"><col style="width:103px"><col style="width:73px"><col style="width:101px"><col style="width:100px"><col style="width:73px"><col style="width:73px"><col style="width:48px"><col style="width:101px"><col style="width:86px"><col style="width:73px"><col style="width:147px"></colgroup>
<tr><th><span class="cb"></span></th><th>ID</th><th>操作</th><th>商品名称</th><th>是否为福利商品</th><th>商品类型</th><th>分类名称</th><th>专区</th><th>商品主图/视频</th><th>商品规格</th><th>库存计算方式</th><th>运费模版名称</th><th>初始销量</th><th>实际销量</th><th>权重</th><th>商品配送类型</th><th>运费模板ID</th><th>商品状态</th><th>创建时间</th></tr>
<tr class="odd">
<td><span class="cb"></span></td>
<td>475</td>
<td style="text-align:left;padding-left:10px;padding-bottom:0"><span class="sb" style="background:#18bc9c"><svg style="position:absolute;left:5.5px;top:5.5px" width="11" height="11" viewBox="0 0 11 11"><path d="M3 8 8.3 2.7" stroke="#fff" stroke-width="3.8" stroke-linecap="round"/><path d="M.3 10.7 1 6.8 4.2 10z" fill="#fff"/></svg></span><span class="sb" style="background:#e74c3c;margin-left:4px;width:21px"><svg style="position:absolute;left:5.5px;top:5px" width="10" height="11" viewBox="0 0 10 11"><path d="M0 1.4h10v1.4H0zM3.3 0h3.4v1.4H3.3zM.9 3.2h8.2L8.4 11H1.6z" fill="#fff"/><path d="M3.6 4.5v5M5 4.5v5M6.4 4.5v5" stroke="#e74c3c" stroke-width=".6"/></svg></span></td>
<td>澳洲有机食品</td>
<td class="grn">非福利商品</td>
<td>平台商品</td>
<td>健康保健</td>
<td>精品区</td>
<td style="padding-bottom:0"><span class="thumb" style="position:relative;overflow:hidden"><i style="position:absolute;left:0px;top:0px;width:30px;height:30px;background:#5a3a28"></i><i style="position:absolute;left:2px;top:2px;width:8px;height:10px;background:#9a7458;border-radius:40%"></i><i style="position:absolute;left:15px;top:1px;width:10px;height:8px;background:#c8b8a8;border-radius:40%"></i><i style="position:absolute;left:4px;top:14px;width:6px;height:5px;background:#d8c8b0;border-radius:50%"></i><i style="position:absolute;left:12px;top:18px;width:9px;height:9px;background:#2a4a2a;border-radius:50%"></i><i style="position:absolute;left:20px;top:10px;width:8px;height:8px;background:#8a5a40;border-radius:40%"></i><i style="position:absolute;left:23px;top:22px;width:6px;height:6px;background:#b0a098;border-radius:50%"></i><i style="position:absolute;left:0px;top:24px;width:10px;height:6px;background:#3a2418"></i></span></td>
<td>单规格</td>
<td class="grn">付款减库存</td>
<td>重庆包邮</td>
<td>0</td>
<td>0</td>
<td>1100</td>
<td>邮寄</td>
<td>25</td>
<td><span style="display:inline-block;width:11px;height:11px;border-radius:50%;background:#2c3e50;vertical-align:-1px;margin-right:4px"></span>上架</td>
<td>2022-01-27 12:33:40</td>
</tr>
<tr class="hov">
<td><span class="cb"></span></td>
<td>500</td>
<td style="text-align:left;padding-left:10px;padding-bottom:0"><span class="sb" style="background:#18bc9c"><svg style="position:absolute;left:5.5px;top:5.5px" width="11" height="11" viewBox="0 0 11 11"><path d="M3 8 8.3 2.7" stroke="#fff" stroke-width="3.8" stroke-linecap="round"/><path d="M.3 10.7 1 6.8 4.2 10z" fill="#fff"/></svg></span><span class="sb" style="background:#e74c3c;margin-left:4px;width:21px"><svg style="position:absolute;left:5.5px;top:5px" width="10" height="11" viewBox="0 0 10 11"><path d="M0 1.4h10v1.4H0zM3.3 0h3.4v1.4H3.3zM.9 3.2h8.2L8.4 11H1.6z" fill="#fff"/><path d="M3.6 4.5v5M5 4.5v5M6.4 4.5v5" stroke="#e74c3c" stroke-width=".6"/></svg></span></td>
<td>美莱健蛋白代餐粉</td>
<td class="grn">非福利商品</td>
<td>平台商品</td>
<td>健康保健</td>
<td>福利区</td>
<td style="padding-bottom:0"><span class="thumb" style="position:relative;overflow:hidden"><i style="position:absolute;left:0px;top:0px;width:30px;height:30px;background:#fff"></i><i style="position:absolute;left:0px;top:0px;width:8px;height:2px;background:#8ab870"></i><i style="position:absolute;left:7px;top:8px;width:4px;height:18px;background:#c8c8c8"></i><i style="position:absolute;left:8px;top:20px;width:2px;height:5px;background:#444"></i><i style="position:absolute;left:14px;top:4px;width:11px;height:24px;background:#f0da20;border-radius:2px"></i><i style="position:absolute;left:16px;top:18px;width:7px;height:6px;background:#f4e890"></i></span></td>
<td>单规格</td>
<td class="grn">付款减库存</td>
<td>重庆包邮</td>
<td>0</td>
<td>0</td>
<td>1006</td>
<td>邮寄</td>
<td>25</td>
<td><span style="display:inline-block;width:11px;height:11px;border-radius:50%;background:#2c3e50;vertical-align:-1px;margin-right:4px"></span>上架</td>
<td>2022-04-26 15:52:48</td>
</tr>
<tr class="odd">
<td><span class="cb"></span></td>
<td>506</td>
<td style="text-align:left;padding-left:10px;padding-bottom:0"><span class="sb" style="background:#18bc9c"><svg style="position:absolute;left:5.5px;top:5.5px" width="11" height="11" viewBox="0 0 11 11"><path d="M3 8 8.3 2.7" stroke="#fff" stroke-width="3.8" stroke-linecap="round"/><path d="M.3 10.7 1 6.8 4.2 10z" fill="#fff"/></svg></span><span class="sb" style="background:#e74c3c;margin-left:4px;width:21px"><svg style="position:absolute;left:5.5px;top:5px" width="10" height="11" viewBox="0 0 10 11"><path d="M0 1.4h10v1.4H0zM3.3 0h3.4v1.4H3.3zM.9 3.2h8.2L8.4 11H1.6z" fill="#fff"/><path d="M3.6 4.5v5M5 4.5v5M6.4 4.5v5" stroke="#e74c3c" stroke-width=".6"/></svg></span></td>
<td>加拿大西洋参</td>
<td class="grn">非福利商品</td>
<td>平台商品</td>
<td>健康保健</td>
<td>福利区</td>
<td style="padding-bottom:0"><span class="thumb" style="position:relative;overflow:hidden"><i style="position:absolute;left:0px;top:0px;width:30px;height:30px;background:#fff"></i><i style="position:absolute;left:2px;top:1px;width:26px;height:2px;background:#a0a0a0;opacity:.6"></i><i style="position:absolute;left:0px;top:6px;width:30px;height:23px;background:#d8c890"></i><i style="position:absolute;left:2px;top:7px;width:26px;height:3px;background:#b89040"></i><i style="position:absolute;left:0px;top:9px;width:3px;height:19px;background:#5a5a30"></i><i style="position:absolute;left:27px;top:9px;width:3px;height:19px;background:#5a5a30"></i><i style="position:absolute;left:8px;top:12px;width:4px;height:10px;background:#b08040"></i><i style="position:absolute;left:17px;top:12px;width:4px;height:10px;background:#b08040"></i><i style="position:absolute;left:0px;top:28px;width:30px;height:2px;background:#3a2a18"></i></span></td>
<td>单规格</td>
<td class="grn">付款减库存</td>
<td>重庆包邮</td>
<td>0</td>
<td>0</td>
<td>1005</td>
<td>邮寄</td>
<td>25</td>
<td><span style="display:inline-block;width:11px;height:11px;border-radius:50%;background:#2c3e50;vertical-align:-1px;margin-right:4px"></span>上架</td>
<td>2022-04-27 10:12:11</td>
</tr>
<tr class="ev">
<td><span class="cb"></span></td>
<td>502</td>
<td style="text-align:left;padding-left:10px;padding-bottom:0"><span class="sb" style="background:#18bc9c"><svg style="position:absolute;left:5.5px;top:5.5px" width="11" height="11" viewBox="0 0 11 11"><path d="M3 8 8.3 2.7" stroke="#fff" stroke-width="3.8" stroke-linecap="round"/><path d="M.3 10.7 1 6.8 4.2 10z" fill="#fff"/></svg></span><span class="sb" style="background:#e74c3c;margin-left:4px;width:21px"><svg style="position:absolute;left:5.5px;top:5px" width="10" height="11" viewBox="0 0 10 11"><path d="M0 1.4h10v1.4H0zM3.3 0h3.4v1.4H3.3zM.9 3.2h8.2L8.4 11H1.6z" fill="#fff"/><path d="M3.6 4.5v5M5 4.5v5M6.4 4.5v5" stroke="#e74c3c" stroke-width=".6"/></svg></span></td>
<td>西班牙橄榄油</td>
<td class="grn">非福利商品</td>
<td>平台商品</td>
<td>粮油类</td>
<td>福利区</td>
<td style="padding-bottom:0"><span class="thumb" style="position:relative;overflow:hidden"><i style="position:absolute;left:0px;top:0px;width:30px;height:30px;background:#3aa888"></i><i style="position:absolute;left:0px;top:12px;width:30px;height:18px;background:#90c8a0"></i><i style="position:absolute;left:5px;top:5px;width:5px;height:22px;background:#e8c020;border-radius:2px 2px 0 0"></i><i style="position:absolute;left:11px;top:5px;width:5px;height:22px;background:#f0c828;border-radius:2px 2px 0 0"></i><i style="position:absolute;left:17px;top:5px;width:5px;height:22px;background:#e8b820;border-radius:2px 2px 0 0"></i><i style="position:absolute;left:23px;top:5px;width:5px;height:22px;background:#e0c030;border-radius:2px 2px 0 0"></i><i style="position:absolute;left:0px;top:26px;width:30px;height:4px;background:#c8a040"></i><i style="position:absolute;left:0px;top:0px;width:5px;height:3px;background:#e04040"></i></span></td>
<td>单规格</td>
<td class="grn">付款减库存</td>
<td>重庆包邮</td>
<td>0</td>
<td>0</td>
<td>1004</td>
<td>邮寄</td>
<td>25</td>
<td><span style="display:inline-block;width:11px;height:11px;border-radius:50%;background:#2c3e50;vertical-align:-1px;margin-right:4px"></span>上架</td>
<td>2022-04-26 16:25:21</td>
</tr>
<tr class="odd">
<td><span class="cb"></span></td>
<td>501</td>
<td style="text-align:left;padding-left:10px;padding-bottom:0"><span class="sb" style="background:#18bc9c"><svg style="position:absolute;left:5.5px;top:5.5px" width="11" height="11" viewBox="0 0 11 11"><path d="M3 8 8.3 2.7" stroke="#fff" stroke-width="3.8" stroke-linecap="round"/><path d="M.3 10.7 1 6.8 4.2 10z" fill="#fff"/></svg></span><span class="sb" style="background:#e74c3c;margin-left:4px;width:21px"><svg style="position:absolute;left:5.5px;top:5px" width="10" height="11" viewBox="0 0 10 11"><path d="M0 1.4h10v1.4H0zM3.3 0h3.4v1.4H3.3zM.9 3.2h8.2L8.4 11H1.6z" fill="#fff"/><path d="M3.6 4.5v5M5 4.5v5M6.4 4.5v5" stroke="#e74c3c" stroke-width=".6"/></svg></span></td>
<td>俄罗斯亚麻籽油</td>
<td class="grn">非福利商品</td>
<td>平台商品</td>
<td>粮油类</td>
<td>福利区</td>
<td style="padding-bottom:0"><span class="thumb" style="position:relative;overflow:hidden"><i style="position:absolute;left:0px;top:0px;width:30px;height:30px;background:#f4efe8"></i><i style="position:absolute;left:1px;top:4px;width:16px;height:3px;background:#40a050"></i><i style="position:absolute;left:1px;top:9px;width:15px;height:3px;background:#d04050"></i><i style="position:absolute;left:2px;top:14px;width:12px;height:2px;background:#888"></i><i style="position:absolute;left:2px;top:18px;width:12px;height:2px;background:#999"></i><i style="position:absolute;left:0px;top:24px;width:14px;height:6px;background:#e8c8a0"></i><i style="position:absolute;left:17px;top:2px;width:6px;height:27px;background:#3a3a20;border-radius:2px 2px 0 0"></i><i style="position:absolute;left:18px;top:8px;width:4px;height:10px;background:#e8e0c8"></i><i style="position:absolute;left:23px;top:20px;width:7px;height:8px;background:#2a3a6a"></i></span></td>
<td>单规格</td>
<td class="grn">付款减库存</td>
<td>重庆包邮</td>
<td>0</td>
<td>0</td>
<td>1003</td>
<td>邮寄</td>
<td>25</td>
<td><span style="display:inline-block;width:11px;height:11px;border-radius:50%;background:#2c3e50;vertical-align:-1px;margin-right:4px"></span>上架</td>
<td>2022-04-26 16:11:28</td>
</tr>
<tr class="ev">
<td><span class="cb"></span></td>
<td>503</td>
<td style="text-align:left;padding-left:10px;padding-bottom:0"><span class="sb" style="background:#18bc9c"><svg style="position:absolute;left:5.5px;top:5.5px" width="11" height="11" viewBox="0 0 11 11"><path d="M3 8 8.3 2.7" stroke="#fff" stroke-width="3.8" stroke-linecap="round"/><path d="M.3 10.7 1 6.8 4.2 10z" fill="#fff"/></svg></span><span class="sb" style="background:#e74c3c;margin-left:4px;width:21px"><svg style="position:absolute;left:5.5px;top:5px" width="10" height="11" viewBox="0 0 10 11"><path d="M0 1.4h10v1.4H0zM3.3 0h3.4v1.4H3.3zM.9 3.2h8.2L8.4 11H1.6z" fill="#fff"/><path d="M3.6 4.5v5M5 4.5v5M6.4 4.5v5" stroke="#e74c3c" stroke-width=".6"/></svg></span></td>
<td>俄罗斯椴树蜂蜜</td>
<td class="grn">非福利商品</td>
<td>平台商品</td>
<td>健康保健</td>
<td>福利区</td>
<td style="padding-bottom:0"><span class="thumb" style="position:relative;overflow:hidden"><i style="position:absolute;left:0px;top:0px;width:30px;height:30px;background:#c8e4f4"></i><i style="position:absolute;left:2px;top:2px;width:26px;height:4px;background:#1a3a7a"></i><i style="position:absolute;left:3px;top:7px;width:24px;height:2px;background:#3a5a9a"></i><i style="position:absolute;left:13px;top:10px;width:4px;height:8px;background:#222"></i><i style="position:absolute;left:8px;top:16px;width:14px;height:9px;background:#2a2010;border-radius:50%"></i><i style="position:absolute;left:10px;top:18px;width:10px;height:5px;background:#d8b840;border-radius:50%"></i><i style="position:absolute;left:0px;top:26px;width:30px;height:4px;background:linear-gradient(90deg,#c040e0,#4040c0,#102040)"></i></span></td>
<td>单规格</td>
<td class="grn">付款减库存</td>
<td>重庆包邮</td>
<td>0</td>
<td>1</td>
<td>1002</td>
<td>邮寄</td>
<td>25</td>
<td><span style="display:inline-block;width:11px;height:11px;border-radius:50%;background:#2c3e50;vertical-align:-1px;margin-right:4px"></span>上架</td>
<td>2022-04-26 16:30:35</td>
</tr>
<tr class="odd">
<td><span class="cb"></span></td>
<td>504</td>
<td style="text-align:left;padding-left:10px;padding-bottom:0"><span class="sb" style="background:#18bc9c"><svg style="position:absolute;left:5.5px;top:5.5px" width="11" height="11" viewBox="0 0 11 11"><path d="M3 8 8.3 2.7" stroke="#fff" stroke-width="3.8" stroke-linecap="round"/><path d="M.3 10.7 1 6.8 4.2 10z" fill="#fff"/></svg></span><span class="sb" style="background:#e74c3c;margin-left:4px;width:21px"><svg style="position:absolute;left:5.5px;top:5px" width="10" height="11" viewBox="0 0 10 11"><path d="M0 1.4h10v1.4H0zM3.3 0h3.4v1.4H3.3zM.9 3.2h8.2L8.4 11H1.6z" fill="#fff"/><path d="M3.6 4.5v5M5 4.5v5M6.4 4.5v5" stroke="#e74c3c" stroke-width=".6"/></svg></span></td>
<td>俄罗斯双峰低脂驼奶粉</td>
<td class="grn">非福利商品</td>
<td>平台商品</td>
<td>健康保健</td>
<td>福利区</td>
<td style="padding-bottom:0"><span class="thumb" style="position:relative;overflow:hidden"><i style="position:absolute;left:0px;top:0px;width:30px;height:30px;background:#8cc8f0"></i><i style="position:absolute;left:10px;top:10px;width:20px;height:20px;background:#70c050"></i><i style="position:absolute;left:1px;top:5px;width:16px;height:6px;background:#f0d030"></i><i style="position:absolute;left:0px;top:10px;width:15px;height:6px;background:#3a3a8a"></i><i style="position:absolute;left:11px;top:12px;width:4px;height:5px;background:#d03030"></i><i style="position:absolute;left:0px;top:16px;width:14px;height:14px;background:#e8d8b8"></i><i style="position:absolute;left:20px;top:10px;width:8px;height:7px;background:#a0b8b0"></i></span></td>
<td>单规格</td>
<td class="grn">付款减库存</td>
<td>重庆包邮</td>
<td>0</td>
<td>0</td>
<td>1001</td>
<td>邮寄</td>
<td>25</td>
<td><span style="display:inline-block;width:11px;height:11px;border-radius:50%;background:#2c3e50;vertical-align:-1px;margin-right:4px"></span>上架</td>
<td>2022-04-26 16:42:35</td>
</tr>
<tr class="ev">
<td><span class="cb"></span></td>
<td>505</td>
<td style="text-align:left;padding-left:10px;padding-bottom:0"><span class="sb" style="background:#18bc9c"><svg style="position:absolute;left:5.5px;top:5.5px" width="11" height="11" viewBox="0 0 11 11"><path d="M3 8 8.3 2.7" stroke="#fff" stroke-width="3.8" stroke-linecap="round"/><path d="M.3 10.7 1 6.8 4.2 10z" fill="#fff"/></svg></span><span class="sb" style="background:#e74c3c;margin-left:4px;width:21px"><svg style="position:absolute;left:5.5px;top:5px" width="10" height="11" viewBox="0 0 10 11"><path d="M0 1.4h10v1.4H0zM3.3 0h3.4v1.4H3.3zM.9 3.2h8.2L8.4 11H1.6z" fill="#fff"/><path d="M3.6 4.5v5M5 4.5v5M6.4 4.5v5" stroke="#e74c3c" stroke-width=".6"/></svg></span></td>
<td>俄罗斯羊奶粉</td>
<td class="grn">非福利商品</td>
<td>平台商品</td>
<td>健康保健</td>
<td>福利区</td>
<td style="padding-bottom:0"><span class="thumb" style="position:relative;overflow:hidden"><i style="position:absolute;left:0px;top:0px;width:30px;height:30px;background:#d8ecf8"></i><i style="position:absolute;left:5px;top:2px;width:20px;height:2px;background:#2a60a0"></i><i style="position:absolute;left:9px;top:5px;width:12px;height:2px;background:#2a60a0"></i><i style="position:absolute;left:6px;top:8px;width:19px;height:22px;background:#e8a820;border-radius:2px"></i><i style="position:absolute;left:12px;top:9px;width:7px;height:10px;background:#e0e0e8"></i><i style="position:absolute;left:0px;top:24px;width:6px;height:6px;background:#90c070"></i></span></td>
<td>单规格</td>
<td class="grn">付款减库存</td>
<td>重庆包邮</td>
<td>0</td>
<td>2</td>
<td>1000</td>
<td>邮寄</td>
<td>25</td>
<td><span style="display:inline-block;width:11px;height:11px;border-radius:50%;background:#2c3e50;vertical-align:-1px;margin-right:4px"></span>上架</td>
<td>2022-04-26 16:46:00</td>
</tr>
<tr class="odd">
<td><span class="cb"></span></td>
<td>480</td>
<td style="text-align:left;padding-left:10px;padding-bottom:0"><span class="sb" style="background:#18bc9c"><svg style="position:absolute;left:5.5px;top:5.5px" width="11" height="11" viewBox="0 0 11 11"><path d="M3 8 8.3 2.7" stroke="#fff" stroke-width="3.8" stroke-linecap="round"/><path d="M.3 10.7 1 6.8 4.2 10z" fill="#fff"/></svg></span><span class="sb" style="background:#e74c3c;margin-left:4px;width:21px"><svg style="position:absolute;left:5.5px;top:5px" width="10" height="11" viewBox="0 0 10 11"><path d="M0 1.4h10v1.4H0zM3.3 0h3.4v1.4H3.3zM.9 3.2h8.2L8.4 11H1.6z" fill="#fff"/><path d="M3.6 4.5v5M5 4.5v5M6.4 4.5v5" stroke="#e74c3c" stroke-width=".6"/></svg></span></td>
<td>Platinum A2高端牛奶粉*3罐</td>
<td class="grn">非福利商品</td>
<td>平台商品</td>
<td>健康保健</td>
<td>精品区</td>
<td style="padding-bottom:0"><span class="thumb" style="position:relative;overflow:hidden"><i style="position:absolute;left:0px;top:0px;width:30px;height:20px;background:#c8c8c8"></i><i style="position:absolute;left:2px;top:2px;width:12px;height:17px;background:#a09878"></i><i style="position:absolute;left:16px;top:2px;width:12px;height:17px;background:#a09878"></i><i style="position:absolute;left:4px;top:7px;width:8px;height:7px;background:#b8a850"></i><i style="position:absolute;left:18px;top:7px;width:8px;height:7px;background:#b8a850"></i><i style="position:absolute;left:0px;top:20px;width:30px;height:10px;background:#f6f6f6"></i></span></td>
<td>单规格</td>
<td class="grn">付款减库存</td>
<td>重庆包邮</td>
<td>0</td>
<td>0</td>
<td>810</td>
<td>邮寄</td>
<td>25</td>
<td><span style="display:inline-block;width:11px;height:11px;border-radius:50%;background:#2c3e50;vertical-align:-1px;margin-right:4px"></span>上架</td>
<td>2022-01-28 12:21:36</td>
</tr>
<tr class="ev">
<td><span class="cb"></span></td>
<td>509</td>
<td style="text-align:left;padding-left:10px;padding-bottom:0"><span class="sb" style="background:#18bc9c"><svg style="position:absolute;left:5.5px;top:5.5px" width="11" height="11" viewBox="0 0 11 11"><path d="M3 8 8.3 2.7" stroke="#fff" stroke-width="3.8" stroke-linecap="round"/><path d="M.3 10.7 1 6.8 4.2 10z" fill="#fff"/></svg></span><span class="sb" style="background:#e74c3c;margin-left:4px;width:21px"><svg style="position:absolute;left:5.5px;top:5px" width="10" height="11" viewBox="0 0 10 11"><path d="M0 1.4h10v1.4H0zM3.3 0h3.4v1.4H3.3zM.9 3.2h8.2L8.4 11H1.6z" fill="#fff"/><path d="M3.6 4.5v5M5 4.5v5M6.4 4.5v5" stroke="#e74c3c" stroke-width=".6"/></svg></span></td>
<td>伊朗藏红花礼盒</td>
<td class="grn">非福利商品</td>
<td>平台商品</td>
<td>健康保健</td>
<td>精品区</td>
<td style="padding-bottom:0"><span class="thumb" style="position:relative;overflow:hidden"><i style="position:absolute;left:0px;top:0px;width:30px;height:30px;background:#2a2a2a"></i><i style="position:absolute;left:2px;top:1px;width:26px;height:28px;background:#e01020"></i><i style="position:absolute;left:5px;top:10px;width:10px;height:8px;background:#9040c0"></i><i style="position:absolute;left:17px;top:10px;width:8px;height:8px;background:#e8e0f0"></i><i style="position:absolute;left:6px;top:19px;width:6px;height:6px;background:#c0a060;border-radius:50%"></i><i style="position:absolute;left:16px;top:19px;width:6px;height:6px;background:#c0a060;border-radius:50%"></i></span></td>
<td>单规格</td>
<td class="grn">付款减库存</td>
<td>重庆包邮</td>
<td>0</td>
<td>0</td>
<td>800</td>
<td>邮寄</td>
<td>25</td>
<td><span style="display:inline-block;width:11px;height:11px;border-radius:50%;background:#2c3e50;vertical-align:-1px;margin-right:4px"></span>上架</td>
<td>2022-05-06 15:37:45</td>
</tr>
</table>
<div class="abs" style="left:260px;top:783.5px;line-height:18px;color:#333">显示第 1 到第 10 条记录，总共 281 条记录 每页显示</div>
<div class="abs" style="left:568px;top:778px;width:50px;height:31px;border:1px solid #ddd;border-radius:3px;background:#f4f4f4;font-size:12px;line-height:29px;padding-left:12px;color:#333">10 <span style="display:inline-block;width:0;height:0;border-left:4px solid transparent;border-right:4px solid transparent;border-bottom:4px solid #333;vertical-align:2px"></span></div>
<div class="abs" style="left:622px;top:783.5px;line-height:18px;color:#333">条记录</div>
<div class="pg" style="left:1415px;width:65px;border-radius:3px 0 0 3px;">上一页</div>
<div class="pg" style="left:1479px;width:34px;background:#2c3e50;border-color:#2c3e50;color:#fff;">1</div>
<div class="pg" style="left:1512px;width:32px;">2</div>
<div class="pg" style="left:1543px;width:33px;">3</div>
<div class="pg" style="left:1575px;width:34px;">4</div>
<div class="pg" style="left:1608px;width:33px;">5</div>
<div class="pg" style="left:1640px;width:38px;background:#fff;color:#999;">...</div>
<div class="pg" style="left:1677px;width:40px;">29</div>
<div class="pg" style="left:1716px;width:65px;border-radius:0 3px 3px 0;">下一页</div>
<div class="abs" style="left:1785px;top:776px;width:50px;height:32px;border:1px solid #ddd;background:#fff"></div>
<div class="abs" style="left:1840px;top:776px;width:50px;height:32px;border:1px solid #ddd;border-radius:3px;background:#f4f4f4;text-align:center;line-height:30px;font-size:12px;color:#333">跳转</div>
</body></html>
